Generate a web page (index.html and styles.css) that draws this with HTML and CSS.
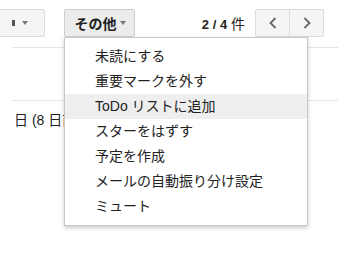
FILE: index.html
```html
<!DOCTYPE html>
<html lang="ja">

<head>
    <meta charset="UTF-8">
    <meta name="viewport" content="width=device-width, initial-scale=1.0">
    <title>その他</title>
    <link rel="stylesheet" href="styles.css">
</head>

<body>
    <div class="toolbar">
        <div class="btn btn-select">
            <span class="select-icon"></span>
            <span class="caret"></span>
        </div>
        <div class="btn btn-more">
            <span>その他</span>
            <span class="caret"></span>
        </div>
        <div class="count"><b>2 / 4</b> 件</div>
        <div class="pager">
            <div class="btn btn-page">
                <svg width="8" height="12" viewBox="0 0 8 12"><path d="M6.5 1 L1.5 6 L6.5 11" fill="none" stroke="#666" stroke-width="1.8"/></svg>
            </div>
            <div class="btn btn-page">
                <svg width="8" height="12" viewBox="0 0 8 12"><path d="M1.5 1 L6.5 6 L1.5 11" fill="none" stroke="#666" stroke-width="1.8"/></svg>
            </div>
        </div>

        <ul class="menu">
            <li>未読にする</li>
            <li>重要マークを外す</li>
            <li class="active">ToDo リストに追加</li>
            <li>スターをはずす</li>
            <li>予定を作成</li>
            <li>メールの自動振り分け設定</li>
            <li>ミュート</li>
        </ul>
    </div>

    <div class="content">
        <div class="row"></div>
        <div class="date">日 (8 日前)</div>
    </div>
</body>

</html>
```

FILE: styles.css
```css
html,
body {
    min-height: 269px;
}

body {
    margin: 0;
    background: #fff;
    font-family: "Liberation Sans", "Noto Sans CJK JP", sans-serif;
    font-size: 13px;
    color: #222;
}

.toolbar {
    position: relative;
    display: flex;
    align-items: center;
    padding-top: 9px;
    height: 28px;
}

.btn {
    box-sizing: border-box;
    height: 28px;
    display: flex;
    align-items: center;
    justify-content: center;
    background: #f5f5f5;
    border: 1px solid #dcdcdc;
    border-radius: 2px;
    color: #444;
}

.btn-select {
    width: 60px;
    margin-left: -15px;
    gap: 7px;
    padding-left: 10px;
}

.select-icon {
    width: 3px;
    height: 6px;
    background: #555;
}

.caret {
    width: 0;
    height: 0;
    border-left: 3px solid transparent;
    border-right: 3px solid transparent;
    border-top: 4px solid #777;
}

.btn-more {
    width: 71px;
    margin-left: 19px;
    gap: 3px;
    padding-left: 1px;
    background: #ececec;
    border-color: #cfcfcf;
    font-weight: bold;
    font-size: 14px;
    color: #222;
}

.count {
    margin-left: auto;
    margin-right: 10px;
    color: #222;
    font-size: 14px;
}

.count b {
    font-size: 13px;
}

.pager {
    display: flex;
    margin-right: 26px;
}

.btn-page {
    width: 35px;
}

.btn-page:first-child {
    border-radius: 2px 0 0 2px;
}

.btn-page:last-child {
    margin-left: -1px;
    border-radius: 0 2px 2px 0;
}

.menu {
    position: absolute;
    left: 64px;
    top: 37px;
    width: 244px;
    box-sizing: border-box;
    margin: 0;
    padding: 6px 0;
    list-style: none;
    background: #fff;
    border: 1px solid #c8c8c8;
    box-shadow: 0 2px 4px rgba(0, 0, 0, 0.2);
    z-index: 2;
}

.menu li {
    height: 25px;
    line-height: 25px;
    padding-left: 30px;
    font-size: 14px;
    color: #222;
}

.menu li.active {
    background: #eee;
}

.content {
    margin: 10px 12px 0;
    border-top: 1px solid #e5e5e5;
}

.row {
    height: 52px;
    border-bottom: 1px solid #e5e5e5;
}

.date {
    padding: 8px 2px;
    font-size: 14px;
    color: #222;
}
```
